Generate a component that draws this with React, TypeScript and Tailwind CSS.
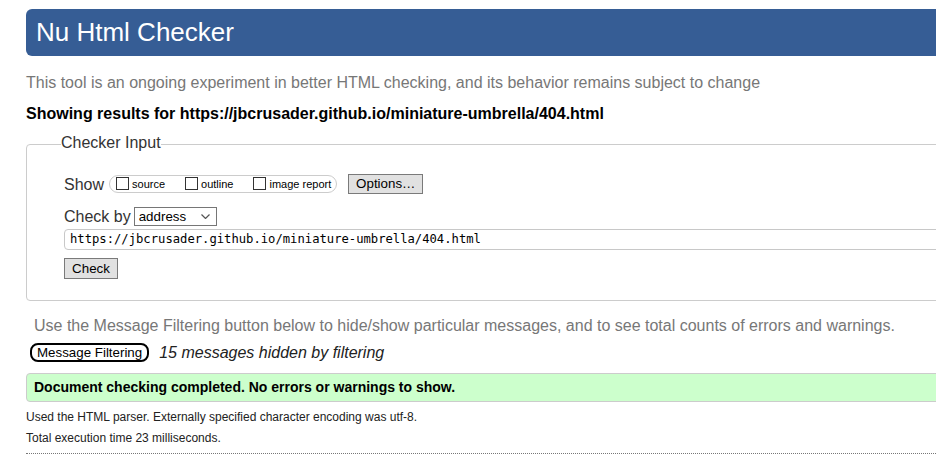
export default function App() {
  const options = ["source", "outline", "image report"];

  return (
    <div className="w-[936px] h-[459px] overflow-hidden bg-white font-['Liberation_Sans',Arial,sans-serif] text-[#333]">
      <div className="w-[1000px] pl-[26px] pt-[9px]">
        {/* Title bar */}
        <h1 className="flex h-[47px] items-center rounded-l-[6px] bg-[#365d95] pl-[10px] text-[26px] font-normal text-white">
          Nu Html Checker
        </h1>

        <p className="mt-[17px] text-[16px] leading-[19px] text-[#777]">
          This tool is an ongoing experiment in better HTML checking, and its behavior remains subject to change
        </p>
        <p className="mt-[12px] text-[16px] font-bold leading-[19px] text-black">
          Showing results for https://jbcrusader.github.io/miniature-umbrella/404.html
        </p>

        {/* Checker input */}
        <fieldset className="mt-[10px] rounded-l-[4px] border border-[#ccc] pb-[20px] pl-[37px] pt-[18px]">
          <legend className="-ml-[3px] pb-[4px] text-[16px] leading-[19px]">Checker Input</legend>

          <div className="flex h-[20px] items-center">
            <span className="text-[16px] leading-[19px]">Show</span>
            <div className="ml-[5px] flex h-[18px] items-end gap-[20px] rounded-[9px] border border-[#ccc] pb-[2px] pl-[6px] pr-[5px]">
              {options.map((o) => (
                <label key={o} className="flex items-end gap-[3px]">
                  <span className="h-[13px] w-[13px] border border-[#333] bg-white" />
                  <span className="text-[11px] leading-[11px] text-black">{o}</span>
                </label>
              ))}
            </div>
            <button className="ml-[11px] h-[20px] w-[75px] border border-[#7a7a7a] bg-[#e1e1e1] text-[13.33px] leading-none text-black">
              Options…
            </button>
          </div>

          <div className="mt-[13px] flex h-[19px] items-center">
            <span className="text-[16px] leading-[19px]">Check by</span>
            <div className="ml-[3px] flex h-[19px] w-[83px] items-center justify-between border border-[#767676] bg-white pl-[4px] pr-[6px] text-[13.33px] text-black">
              <span>address</span>
              <svg width="9" height="5" viewBox="0 0 9 5" fill="none" stroke="#555" strokeWidth="1.2">
                <path d="M0.5 0.5 L4.5 4.5 L8.5 0.5" />
              </svg>
            </div>
          </div>

          <div className="mt-[3px] flex h-[21px] items-center rounded-l-[4px] border border-[#c8c8c8] pl-[5px] font-['DejaVu_Sans_Mono',monospace] text-[12.2px] text-black">
            https://jbcrusader.github.io/miniature-umbrella/404.html
          </div>

          <button className="mt-[8px] h-[21px] w-[54px] border border-[#7a7a7a] bg-[#e1e1e1] text-[13.33px] leading-none text-black">
            Check
          </button>
        </fieldset>

        <p className="mt-[15px] pl-[8px] text-[16px] leading-[19px] text-[#777]">
          Use the Message Filtering button below to hide/show particular messages, and to see total counts of errors and warnings.
        </p>

        <div className="mt-[8px] flex items-center pl-[4px]">
          <button className="flex h-[19px] items-center rounded-[8px] border-2 border-black bg-white px-[5px] text-[13.33px] leading-none text-black">
            Message Filtering
          </button>
          <span className="ml-[10px] text-[16px] italic leading-[19px] text-[#222]">15 messages hidden by filtering</span>
        </div>

        <div className="mt-[11px] flex h-[29px] items-center rounded-l-[4px] border border-[#ccc] bg-[#ccffcc] pl-[7px] text-[14px] font-bold text-black">
          Document checking completed. No errors or warnings to show.
        </div>

        <p className="mt-[8px] text-[12px] leading-[15px] text-[#222]">
          Used the HTML parser. Externally specified character encoding was utf-8.
        </p>
        <p className="mt-[6px] text-[12px] leading-[15px] text-[#222]">Total execution time 23 milliseconds.</p>

        <div className="mt-[7px] border-t border-dotted border-[#777]" />
      </div>
    </div>
  );
}
